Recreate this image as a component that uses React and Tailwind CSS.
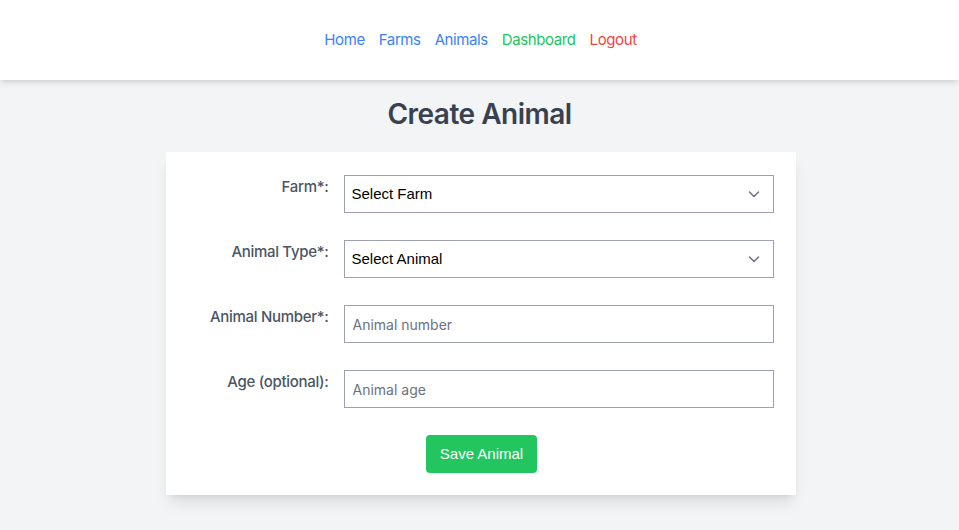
import React, { useState } from "react";

const sans = { fontFamily: "Inter, 'Noto Sans', sans-serif" };

const Chevron = () => (
  <svg
    className="pointer-events-none absolute right-[14px] top-1/2 -translate-y-1/2 h-[12px] w-[12px] text-[#6b7280]"
    viewBox="0 0 12 12"
    fill="none"
    stroke="currentColor"
    strokeWidth={1.5}
  >
    <path d="M1.5 4l4.5 4.5L10.5 4" strokeLinecap="round" strokeLinejoin="round" />
  </svg>
);

const Row = ({ label, children }) => (
  <div className="flex items-start">
    <label className="w-[139px] shrink-0 pt-[1px] text-right text-[15px] font-medium text-[#4b5563] tracking-[-0.3px]">
      {label}
    </label>
    <div className="ml-[15px] flex-1">{children}</div>
  </div>
);

const App = () => {
  const [farm, setFarm] = useState("");
  const [animal, setAnimal] = useState("");

  return (
    <div className="min-h-screen bg-[#f3f4f6]" style={sans}>
      <header className="h-20 bg-white shadow-md flex items-center justify-center">
        <nav className="flex items-center gap-[14px] text-[15px] tracking-[-0.4px] pl-[2px]">
          <a href="#" className="text-[#3b82f6]">Home</a>
          <a href="#" className="text-[#3b82f6]">Farms</a>
          <a href="#" className="text-[#3b82f6]">Animals</a>
          <a href="#" className="text-[#22c55e]">Dashboard</a>
          <a href="#" className="text-[#ef4444]">Logout</a>
        </nav>
      </header>

      <h1 className="pt-4 mb-5 text-center text-[28px] leading-9 font-semibold text-[#374151] tracking-[-0.5px]">
        Create Animal
      </h1>

      <div className="mx-auto w-[630px] translate-x-[1px] bg-white shadow-lg pt-[23px] pb-[22px] pl-6 pr-[22px]">
        <div className="flex flex-col gap-[27px]">
          <Row label="Farm*:">
            <div className="relative">
              <select
                value={farm}
                onChange={(e) => setFarm(e.target.value)}
                className="h-[38px] w-full appearance-none border border-[#9ca0b0] bg-white pl-[7px] text-[15px] text-black outline-none"
                style={{ fontFamily: "'Liberation Sans', Arial, sans-serif" }}
              >
                <option value="">Select Farm</option>
              </select>
              <Chevron />
            </div>
          </Row>
          <Row label="Animal Type*:">
            <div className="relative">
              <select
                value={animal}
                onChange={(e) => setAnimal(e.target.value)}
                className="h-[38px] w-full appearance-none border border-[#9ca0b0] bg-white pl-[7px] text-[15px] text-black outline-none"
                style={{ fontFamily: "'Liberation Sans', Arial, sans-serif" }}
              >
                <option value="">Select Animal</option>
              </select>
              <Chevron />
            </div>
          </Row>
          <Row label="Animal Number*:">
            <input
              type="text"
              placeholder="Animal number"
              className="h-[38px] w-full border border-[#9ca0b0] px-2 text-[14px] placeholder:text-[#6b7280] outline-none"
            />
          </Row>
          <Row label="Age (optional):">
            <input
              type="number"
              placeholder="Animal age"
              className="h-[38px] w-full border border-[#9ca0b0] px-2 text-[14px] placeholder:text-[#6b7280] outline-none"
            />
          </Row>
          <div className="flex justify-center">
            <button
              className="h-[38px] w-[111px] rounded bg-[#22c55e] text-[15px] text-white"
              style={{ fontFamily: "'Liberation Sans', Arial, sans-serif" }}
            >
              Save Animal
            </button>
          </div>
        </div>
      </div>
    </div>
  );
};

export default App;
